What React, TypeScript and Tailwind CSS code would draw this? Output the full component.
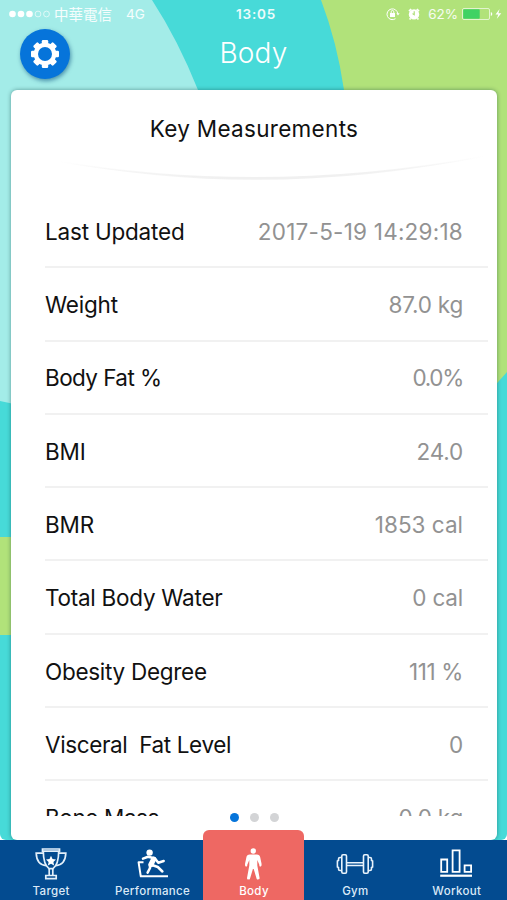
import type { ReactNode } from "react";

const MEASUREMENTS = [
  { label: "Last Updated", value: "2017-5-19 14:29:18", valueClass: "tracking-[0.23px]" },
  { label: "Weight", value: "87.0 kg" },
  { label: "Body Fat %", value: "0.0%", labelClass: "tracking-[-0.58px]", valueClass: "tracking-[-1.3px]" },
  { label: "BMI", value: "24.0" },
  { label: "BMR", value: "1853 cal", valueClass: "tracking-[0px]" },
  { label: "Total Body Water", value: "0 cal", labelClass: "tracking-[-0.26px]" },
  { label: "Obesity Degree", value: "111 %", labelClass: "tracking-[-0.28px]", valueClass: "tracking-[-0.4px]" },
  { label: "Visceral  Fat Level", value: "0", labelClass: "tracking-[-0.38px]" },
  { label: "Bone Mass", value: "0.0 kg", labelClass: "tracking-[-0.4px]" },
];

function Backdrop() {
  return (
    <svg
      className="absolute inset-0 h-[840px] w-full rounded-b-md"
      viewBox="0 0 507 840"
      aria-hidden="true"
    >
      <rect width="507" height="840" fill="#47dad8" />
      <path d="M0 0H152Q178 40 198 90Q250 430 60 410Q30 408 0 401Z" fill="#a3ece8" />
      <path d="M321 0Q337 42 344 90Q380 440 490 391L507 372V0Z" fill="#b1e27a" />
      <path d="M0 537H60V635H0Z" fill="#b1e27a" />
    </svg>
  );
}

function StatusBar() {
  return (
    <div className="flex h-7 items-center text-[13.5px] text-white/90">
      <div className="flex w-[236px] items-center pl-[9px]">
        <svg width="43" height="8" viewBox="0 0 43 8" fill="white">
          <circle cx="3.5" cy="4" r="3.3" />
          <circle cx="12" cy="4" r="3.3" />
          <circle cx="20.5" cy="4" r="3.3" />
          <g fill="none" stroke="white" strokeWidth=".8" opacity=".8">
            <circle cx="29" cy="4" r="2.9" />
            <circle cx="37.5" cy="4" r="2.9" />
          </g>
        </svg>
        <span className="ml-[2px] font-['Noto_Sans_CJK_TC',sans-serif] text-[14.5px] leading-none">
          中華電信
        </span>
        <span className="ml-[14px]">4G</span>
      </div>
      <span className="text-[13.5px] font-semibold tracking-[0.8px]">13:05</span>
      <div className="ml-auto flex items-center pr-[5px]">
        <svg width="14" height="14" viewBox="0 0 14 14" fill="none" stroke="white">
          <path d="M11.8 7A5.4 5.4 0 1 0 9.5 11.7" strokeWidth="1" />
          <path d="M10.4 6.3h3.2L12 8.6z" fill="white" stroke="none" />
          <path d="M4 6h5v4H4z" fill="white" stroke="none" />
          <path d="M5.2 6V4.8a1.3 1.3 0 0 1 2.6 0V6" />
        </svg>
        <svg className="ml-[7px]" width="14" height="14" viewBox="0 0 14 14">
          <circle cx="7" cy="7.4" r="5.2" fill="white" />
          <path d="M2 4.2 4.2 2M9.8 2l2.2 2.2M3.6 11.3l-1 1.2M10.4 11.3l1 1.2" stroke="white" strokeWidth="1.7" />
          <path d="M7.2 4.2v3.5L5.5 6.6" fill="none" stroke="#a8dc70" strokeWidth="1.1" />
        </svg>
        <span className="ml-[7px] text-[13.5px]">62%</span>
        <svg className="ml-[3px]" width="41" height="14" viewBox="0 0 41 14">
          <rect x="1.5" y="1.5" width="27" height="11" rx="1.5" fill="none" stroke="white" strokeWidth=".8" opacity=".8" />
          <rect x="2.2" y="2.2" width="16.5" height="9.6" rx=".8" fill="#40d264" />
          <path d="M29.8 5v4q1.5-.5 1.5-2t-1.5-2z" fill="white" />
          <path d="M38.6 2 34.5 7.4h2.8L35.7 12l4.6-5.8h-2.9z" fill="white" />
        </svg>
      </div>
    </div>
  );
}

function GearIcon() {
  return (
    <svg width="30" height="30" viewBox="-15 -15 30 30" aria-hidden="true">
      <g fill="white">
        <circle r="11.3" />
        {[0, 45, 90, 135].map((angle) => (
          <rect key={angle} x="-3.2" y="-14" width="6.4" height="28" rx="1.2" transform={`rotate(${angle})`} />
        ))}
      </g>
      <circle r="7" fill="#0674da" />
    </svg>
  );
}

function Header() {
  return (
    <header className="grid h-[62px] grid-cols-[90px_1fr_90px]">
      <button
        aria-label="Settings"
        className="ml-5 mt-px flex size-[50px] items-center justify-center rounded-full bg-[#0674da] shadow-[1px_2px_4px_rgba(0,70,120,0.55)]"
      >
        <GearIcon />
      </button>
      <h1 className="pt-[6px] text-center text-[28px] leading-[38px] font-light tracking-[0.2px] text-white">
        Body
      </h1>
    </header>
  );
}

function TrophyIcon() {
  return (
    <svg width="34" height="34" viewBox="0 0 34 34" fill="none" stroke="#e3effa" strokeWidth="1.7">
      <path d="M8.5 2h17v2.2h-17zM9.3 4.2c0 9 1.2 14 5.7 17.4h4c4.5-3.4 5.7-8.4 5.7-17.4" />
      <path d="M9 6.2H2.2C2.5 14.5 6 18 12.3 18.6M25 6.2h6.8C31.5 14.5 28 18 21.7 18.6" />
      <path d="M15.2 21.7v6M18.8 21.7v6M11.8 28.5h10.4v3.2H11.8z" />
      <path d="m17 8.8 1.5 3.3 3.5.4-2.6 2.4.7 3.5-3.1-1.7-3.1 1.7.7-3.5-2.6-2.4 3.5-.4z" fill="white" stroke="none" />
    </svg>
  );
}

function TreadmillIcon() {
  return (
    <svg width="34" height="34" viewBox="0 0 34 34" fill="none" stroke="white" strokeLinecap="round" strokeLinejoin="round">
      <circle cx="14.6" cy="5.6" r="3.2" fill="white" stroke="none" />
      <path d="M7.5 15.3H3.6L5.8 29.3H32" strokeWidth="2" strokeLinecap="square" />
      <path d="M8 11.6 13 9.8l6.5 1.4" strokeWidth="2.5" />
      <path d="m18.6 12.2-2.6 5.3" strokeWidth="5.2" />
      <path d="m20 11.5 3.3 4.2 5.4-1.7M14.8 17.8 15 21l-2.4 4.6M17 18l5.8 2 4.6 4.5" strokeWidth="2.5" />
    </svg>
  );
}

function BodyIcon() {
  return (
    <svg width="34" height="34" viewBox="0 0 34 34" fill="white">
      <circle cx="17.3" cy="4" r="2.7" />
      <path d="M13.8 7.6h7c2 0 3 .8 3.4 2.6l1.3 6.300c.3 2-.3 3.300-1.200 3.100-.8-.1-1-.9-1-1.900l-2-4.700v5.500l2.300 12.600c.2 1.400-2.300 1.800-2.900.8L17.700 22h-.8l-3 9.900c-.6 1-3.100.6-2.900-.8l2.300-12.600V13l-2 4.700c0 1-.2 1.800-1 1.900-.9.2-1.500-1.100-1.200-3.100l1.300-6.300c.4-1.800 1.400-2.600 3.400-2.600z" />
    </svg>
  );
}

function DumbbellIcon() {
  return (
    <svg width="38" height="34" viewBox="0 0 38 34" fill="none" stroke="#e9f3fc" strokeWidth="1.6">
      <rect x="5.8" y="7.8" width="4.7" height="18.4" rx="1.2" />
      <rect x="27.5" y="7.8" width="4.7" height="18.4" rx="1.2" />
      <path d="M5.5 10.5H4c-1 0-1.5.5-1.5 1.5v1.5L1.4 14v6l1.1.5V22c0 1 .5 1.500 1.500 1.500h1.500M32.500 10.500H34c1 0 1.500.5 1.500 1.500v1.500l1.100.5v6l-1.100.5V22c0 1-.5 1.500-1.500 1.500h-1.500M10.500 15.700h17M10.500 18.500h17" />
    </svg>
  );
}

function ChartIcon() {
  return (
    <svg width="34" height="34" viewBox="0 0 34 34" fill="none" stroke="white" strokeWidth="1.8">
      <path d="M2.2 12.5h6v12.3h-6zM13.6 3.3h7v21.5h-7zM25.6 18.4h6.5v6.4h-6.5z" />
      <path d="M1.2 28.7H33" strokeWidth="2.2" />
    </svg>
  );
}

const TABS: { label: string; icon: ReactNode }[] = [
  { label: "Target", icon: <TrophyIcon /> },
  { label: "Performance", icon: <TreadmillIcon /> },
  { label: "Body", icon: <BodyIcon /> },
  { label: "Gym", icon: <DumbbellIcon /> },
  { label: "Workout", icon: <ChartIcon /> },
];

function TabBar({ active }: { active: string }) {
  return (
    <nav className="relative grid h-[60px] grid-cols-5 grid-rows-[60px] items-end bg-[#034b90]">
      {TABS.map((tab) => (
        <button
          key={tab.label}
          className={
            tab.label === active
              ? "flex h-[70px] flex-col items-center rounded-t-md bg-[#ee6863] pt-[17px] text-white"
              : "flex h-[60px] flex-col items-center pt-[7px] text-[#dbe9f7]"
          }
        >
          {tab.icon}
          <span className="mt-[3px] ml-[1px] text-[11.5px] leading-[15px] font-medium tracking-[0.35px]">
            {tab.label}
          </span>
        </button>
      ))}
    </nav>
  );
}

export default function App() {
  return (
    <div className="relative flex h-[900px] w-[507px] flex-col overflow-hidden bg-white font-['Inter',sans-serif]">
      <Backdrop />
      <div className="relative flex h-[840px] flex-col">
        <StatusBar />
        <Header />

        <main className="mr-[10px] ml-[11px] flex h-[750px] flex-col rounded-md bg-white shadow-[0_0_4px_rgba(0,50,50,0.45)]">
          <h2 className="h-[66px] pt-[23px] text-center text-[22.5px] leading-8 tracking-[0.3px] text-[#111]">
            Key Measurements
          </h2>
          <svg className="h-[38px] w-full" viewBox="0 0 486 38" aria-hidden="true">
            <defs>
              <linearGradient id="fade">
                <stop offset="0" stopColor="#eee" stopOpacity="0" />
                <stop offset=".4" stopColor="#f0f0f0" />
                <stop offset=".65" stopColor="#f0f0f0" />
                <stop offset="1" stopColor="#eee" stopOpacity="0" />
              </linearGradient>
            </defs>
            <path d="M45 5Q255 41 475 0Q255 45 45 5Z" fill="url(#fade)" />
            <path d="M45 5Q255 41 475 0" fill="none" stroke="url(#fade)" strokeWidth="1.5" />
          </svg>

          {/* Measurement list, cut off above the card's bottom edge */}
          <ul className="h-[622px] overflow-hidden pt-[1px] pr-[9px] pl-[34px]">
            {MEASUREMENTS.map((m) => (
              <li
                key={m.label}
                className="flex h-[73.3px] items-center justify-between border-b-2 border-[#f1f1f1] pt-[2px] pr-[25px] text-[22.5px] tracking-[-0.2px]"
              >
                <span className={`whitespace-pre text-[#111] ${m.labelClass ?? ""}`}>{m.label}</span>
                <span className={`text-[#929292] ${m.valueClass ?? ""}`}>{m.value}</span>
              </li>
            ))}
          </ul>

          <div className="-mt-[3px] flex justify-center gap-[11px]">
            <span className="size-[9px] rounded-full bg-[#0674da]" />
            <span className="size-[9px] rounded-full bg-[#d3d4d6]" />
            <span className="size-[9px] rounded-full bg-[#d3d4d6]" />
          </div>
        </main>
      </div>
      <TabBar active="Body" />
    </div>
  );
}
